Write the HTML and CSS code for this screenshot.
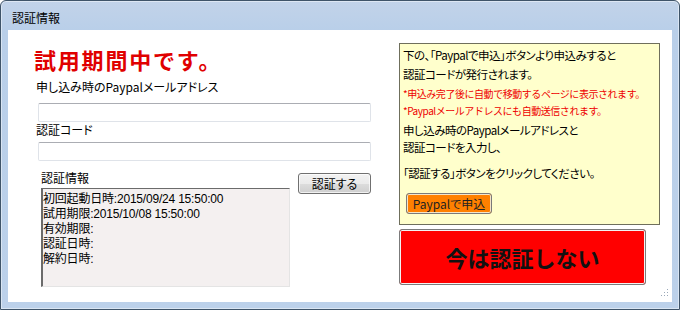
FILE: index.html
```html
<!DOCTYPE html>
<html lang="ja">
<head>
<meta charset="utf-8">
<title>認証情報</title>
<link rel="stylesheet" href="styles.css">
</head>
<body>
<div class="window">
  <div class="titlebar">認証情報</div>
  <div class="client">
    <div class="left">
      <h1 class="heading">試用期間中です。</h1>
      <div class="label">申し込み時のPaypalメールアドレス</div>
      <div class="input input-mail"></div>
      <div class="label">認証コード</div>
      <div class="input input-code"></div>
      <div class="info-row">
        <div class="info-col">
          <div class="label">認証情報</div>
          <div class="memo">
            <div>初回起動日時:2015/09/24 15:50:00</div>
            <div>試用期限:2015/10/08 15:50:00</div>
            <div>有効期限:</div>
            <div>認証日時:</div>
            <div>解約日時:</div>
          </div>
        </div>
        <button class="btn-auth">認証する</button>
      </div>
    </div>
    <div class="right">
      <div class="notice">
        <div class="line l1">下の、「Paypalで申込」ボタンより申込みすると</div>
        <div class="line l2">認証コードが発行されます。</div>
        <div class="note n1">*申込み完了後に自動で移動するページに表示されます。</div>
        <div class="note n2">*Paypalメールアドレスにも自動送信されます。</div>
        <div class="line l5">申し込み時のPaypalメールアドレスと</div>
        <div class="line l6">認証コードを入力し、</div>
        <div class="line l7">「認証する」ボタンをクリックしてください。</div>
        <button class="btn-paypal">Paypalで申込</button>
      </div>
      <button class="btn-skip">今は認証しない</button>
    </div>
    <svg class="grip" width="10" height="10" viewBox="0 0 10 10">
      <g fill="#9aa8b8">
        <rect x="8" y="0" width="1" height="1"/>
        <rect x="5" y="3" width="1" height="1"/><rect x="8" y="3" width="1" height="1"/>
        <rect x="2" y="6" width="1" height="1"/><rect x="5" y="6" width="1" height="1"/><rect x="8" y="6" width="1" height="1"/>
      </g>
      <g fill="#ffffff">
        <rect x="9" y="1" width="1" height="1"/>
        <rect x="6" y="4" width="1" height="1"/><rect x="9" y="4" width="1" height="1"/>
        <rect x="3" y="7" width="1" height="1"/><rect x="6" y="7" width="1" height="1"/><rect x="9" y="7" width="1" height="1"/>
      </g>
    </svg>
  </div>
</div>
</body>
</html>
```
FILE: styles.css
```css
* { box-sizing: border-box; }
html, body { margin: 0; padding: 0; background: #fff; }
body {
  font-family: "Noto Sans CJK JP", "Noto Sans", sans-serif;
  font-size: 12px;
  color: #000;
}
.window {
  width: 680px;
  height: 310px;
  border: 1px solid #3f5469;
  border-radius: 6px 6px 0 0;
  background: linear-gradient(to bottom, #c2d3e9 0px, #b9cfe9 30px, #bcd1ea 100%);
  box-shadow: inset 0 0 0 1px rgba(255,255,255,0.45);
  display: flex;
  flex-direction: column;
}
.titlebar {
  height: 29px;
  padding: 9px 0 0 11px;
  line-height: 16px;
  font-size: 12px;
  color: #000;
  flex: none;
  font-feature-settings: "palt";
}
.client {
  position: relative;
  flex: 1;
  margin: 0 7px 7px 7px;
  background: #fff;
  display: flex;
  padding: 16px 0 0 28px;
}
.left {
  width: 336px;
  display: flex;
  flex-direction: column;
}
.heading {
  margin: 0 0 0 -2px;
  font-size: 22px;
  line-height: 26px;
  font-weight: bold;
  color: #e00000;
  letter-spacing: 1.8px;
}
.label {
  line-height: 15px;
  font-size: 12px;
  font-feature-settings: "palt";
  white-space: nowrap;
}
.left > .label:first-of-type { margin-top: 7px; }
.input {
  margin-left: 2px;
  width: 333px;
  height: 19px;
  border: 1px solid #dfe3e9;
  border-top-color: #abadb3;
  border-radius: 2px;
  background: #fff;
}
.input-mail { margin-top: 9px; }
.input-code { margin-top: 5px; }
.info-row {
  margin: 9px 0 0 5px;
  display: flex;
  align-items: flex-start;
}
.info-col {
  display: flex;
  flex-direction: column;
}
.memo {
  margin-top: 3px;
  width: 249px;
  height: 99px;
  background: #f4f0f0;
  border: 1px solid #e4e4e4;
  border-top-color: #6b6b6b;
  border-left-color: #6b6b6b;
  border-left-width: 2px;
  padding: 3px 0 0 0;
  font-family: "Liberation Sans", "Noto Sans CJK JP", sans-serif;
  font-size: 12px;
  line-height: 15px;
  letter-spacing: -0.2px;
}
.btn-auth {
  margin: 3px 0 0 8px;
  width: 73px;
  height: 21px;
  padding: 0;
  border: 1px solid #707070;
  border-radius: 3px;
  background: linear-gradient(to bottom, #f2f2f2 0%, #ebebeb 50%, #dddddd 51%, #cfcfcf 100%);
  box-shadow: inset 0 0 0 1px rgba(255,255,255,0.7);
  font-family: "Noto Sans CJK JP", sans-serif;
  font-size: 12px;
  line-height: 17px;
  color: #000;
  font-feature-settings: "palt";
}
.right {
  margin-left: 27px;
  width: 261px;
  margin-top: -3px;
  display: flex;
  flex-direction: column;
}
.notice {
  background: #ffffcc;
  border: 1px solid #6f6f5c;
  padding: 3px 0 10px 3px;
  display: flex;
  flex-direction: column;
  align-items: flex-start;
  height: 182px;
}
.line {
  font-size: 11.5px;
  line-height: 17px;
  font-feature-settings: "palt";
  letter-spacing: -0.5px;
  white-space: nowrap;
}
.l2 { margin-top: 2px; }
.note {
  color: #ee0000;
  font-size: 10px;
  line-height: 14px;
  white-space: nowrap;
  letter-spacing: -0.45px;
}
.n1 { margin-top: 3.5px; }
.n2 { margin-top: 3px; }
.l5 { margin-top: 4.5px; }
.l7 { margin-top: 9px; }
.btn-paypal {
  margin: 11px 0 0 3px;
  width: 86px;
  height: 21px;
  padding: 0;
  border: 1px solid #7a7a7a;
  border-radius: 3px;
  background: #ff8000;
  box-shadow: inset 0 0 0 1px #f4e4c8;
  font-family: "Noto Sans CJK JP", sans-serif;
  font-size: 12px;
  line-height: 17px;
  color: #222;
  font-feature-settings: "palt";
}
.btn-skip {
  margin-top: 4px;
  width: 247px;
  height: 56px;
  padding: 0;
  border: 1px solid #7b7b7b;
  border-radius: 3px;
  background: #ff0000;
  box-shadow: inset 0 0 0 1px #f3f3f3;
  font-family: "Noto Sans CJK JP", sans-serif;
  font-size: 22px;
  font-weight: bold;
  color: #111;
  line-height: 26px;
}
.grip {
  position: absolute;
  right: 3px;
  bottom: 3px;
}
```
